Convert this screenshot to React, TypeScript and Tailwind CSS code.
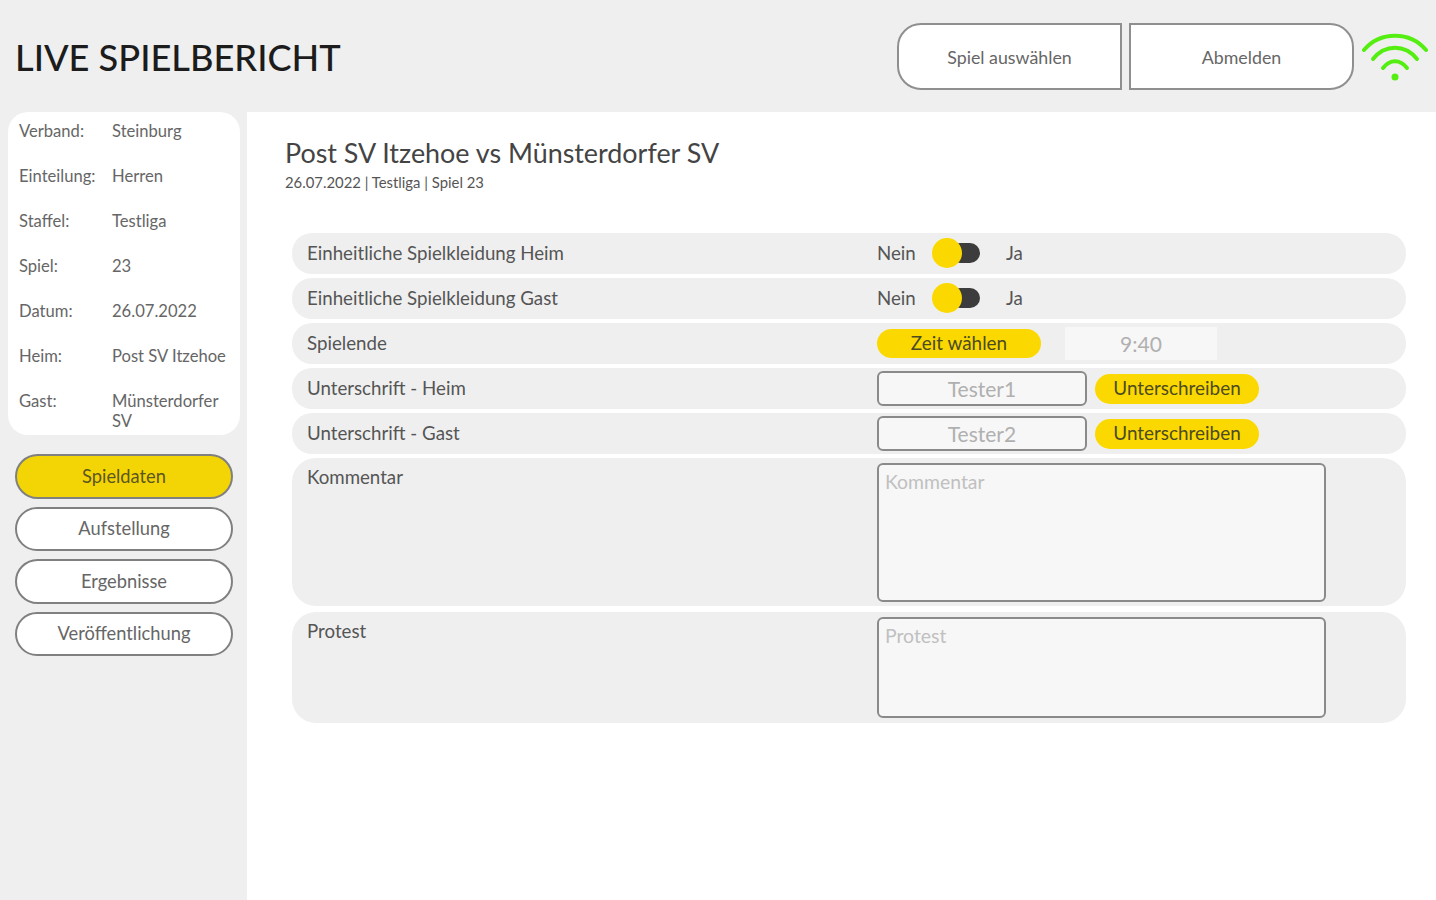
const info = [
  ['Verband:', 'Steinburg'],
  ['Einteilung:', 'Herren'],
  ['Staffel:', 'Testliga'],
  ['Spiel:', '23'],
  ['Datum:', '26.07.2022'],
  ['Heim:', 'Post SV Itzehoe'],
  ['Gast:', 'Münsterdorfer SV'],
]

const nav = ['Spieldaten', 'Aufstellung', 'Ergebnisse', 'Veröffentlichung']

function Toggle() {
  return (
    <div className="flex items-center text-[18.7px] text-[#555]">
      <span className="w-[55px]">Nein</span>
      <span className="relative block w-[48px] h-[20px] mr-[26px] shrink-0">
        <span className="absolute right-0 top-0 w-[30px] h-[20px] rounded-full bg-[#3c3c3c]" />
        <span className="absolute left-0 top-[-5px] w-[30px] h-[30px] rounded-full bg-[#fbd900]" />
      </span>
      <span>Ja</span>
    </div>
  )
}

function Row({ label, children }: { label: string; children: React.ReactNode }) {
  return (
    <div className="flex items-center h-[41px] pl-[15px] rounded-[20px] bg-[#efefef]">
      <div className="w-[570px] shrink-0 text-[18.7px] text-[#555]">{label}</div>
      {children}
    </div>
  )
}

function Signature({ name }: { name: string }) {
  return (
    <>
      <div className="w-[210px] h-[35px] flex items-center justify-center rounded-md border-2 border-[#8a8a8a] bg-[#f7f7f7] text-[21px] text-[#b0b0b0]">
        {name}
      </div>
      <button className="ml-2 w-[164px] h-[30px] rounded-full bg-[#fbd900] text-[18.9px] text-[#4d4a20]">Unterschreiben</button>
    </>
  )
}

function TextRow({ label, height, boxHeight }: { label: string; height: string; boxHeight: string }) {
  return (
    <div className={`flex items-start pl-[15px] pt-[5px] rounded-[24px] bg-[#efefef] ${height}`}>
      <div className="w-[570px] shrink-0 text-[18.7px] text-[#555]">{label}</div>
      <div className={`w-[449px] px-[6px] py-[5px] rounded-md border-2 border-[#8a8a8a] bg-[#f7f7f7] text-[19.4px] leading-6 text-[#c0c0c0] ${boxHeight}`}>
        {label}
      </div>
    </div>
  )
}

export default function App() {
  return (
    <div className="w-[1436px] h-[900px] overflow-hidden bg-[#efefef] font-['Lato',sans-serif]">
      <header className="h-[112px] flex items-center pl-[15px] pr-2">
        <h1 className="pt-[2px] text-[36.2px] font-medium text-[#1c1c1c]">LIVE SPIELBERICHT</h1>
        <div className="ml-auto flex items-center">
          <button className="w-[225px] h-[67px] rounded-l-[24px] border-2 border-[#8f8f8f] bg-white pt-[2px] text-[17.8px] text-[#666]">Spiel auswählen</button>
          <button className="ml-[7px] w-[225px] h-[67px] rounded-r-[24px] border-2 border-[#8f8f8f] bg-white pt-[2px] text-[17.8px] text-[#666]">Abmelden</button>
          <svg className="ml-[8px] mt-[1px]" width="66" height="50" viewBox="0 0 66 50" fill="none" stroke="#55ee11" strokeWidth="4" strokeLinecap="round">
            <path d="M2 18C18 -1 48 -1 64 18" />
            <path d="M11 27C23 12 43 12 55 27" />
            <path d="M21 36C28 27 38 27 45 36" />
            <circle cx="33" cy="45" r="3.5" fill="#55ee11" stroke="none" />
          </svg>
        </div>
      </header>

      <div className="flex h-[788px]">
        <aside className="w-[247px] shrink-0">
          <div className="ml-2 w-[232px] h-[323px] rounded-[20px] bg-white pl-[11px] pr-2 pt-[9px] text-[16.6px] text-[#666]">
            {info.map(([k, v]) => (
              <div key={k} className="flex h-[45px] leading-5">
                <div className="w-[93px] shrink-0">{k}</div>
                <div>{v}</div>
              </div>
            ))}
          </div>
          <nav className="mt-[19px] ml-[15px] w-[218px] flex flex-col gap-[8px]">
            {nav.map((n, i) => (
              <button
                key={n}
                className={`h-[44.5px] rounded-full border-2 border-[#808080] text-[18.3px] ${i === 0 ? 'bg-[#f3d505] text-[#5c5520]' : 'bg-white text-[#666]'}`}
              >
                {n}
              </button>
            ))}
          </nav>
        </aside>

        <main className="flex-1 bg-white pl-[38px]">
          <h2 className="mt-[23px] text-[26.9px] leading-[36px] text-[#444]">Post SV Itzehoe vs Münsterdorfer SV</h2>
          <p className="mt-[1px] text-[14.85px] leading-5 text-[#555]">26.07.2022 | Testliga | Spiel 23</p>

          <div className="mt-[41px] ml-[7px] w-[1114px] flex flex-col gap-[4px]">
            <Row label="Einheitliche Spielkleidung Heim"><Toggle /></Row>
            <Row label="Einheitliche Spielkleidung Gast"><Toggle /></Row>
            <Row label="Spielende">
              <button className="w-[164px] h-[29px] rounded-full bg-[#fbd900] text-[18.9px] text-[#4d4a20]">Zeit wählen</button>
              <div className="ml-[24px] w-[152px] h-[33px] flex items-center justify-center bg-[#f7f7f7] text-[21px] text-[#b0b0b0]">9:40</div>
            </Row>
            <Row label="Unterschrift - Heim"><Signature name="Tester1" /></Row>
            <Row label="Unterschrift - Gast"><Signature name="Tester2" /></Row>
            <TextRow label="Kommentar" height="h-[148px]" boxHeight="h-[139px]" />
            <div className="mt-[2px]">
              <TextRow label="Protest" height="h-[111px]" boxHeight="h-[101px]" />
            </div>
          </div>
        </main>
      </div>
    </div>
  )
}
